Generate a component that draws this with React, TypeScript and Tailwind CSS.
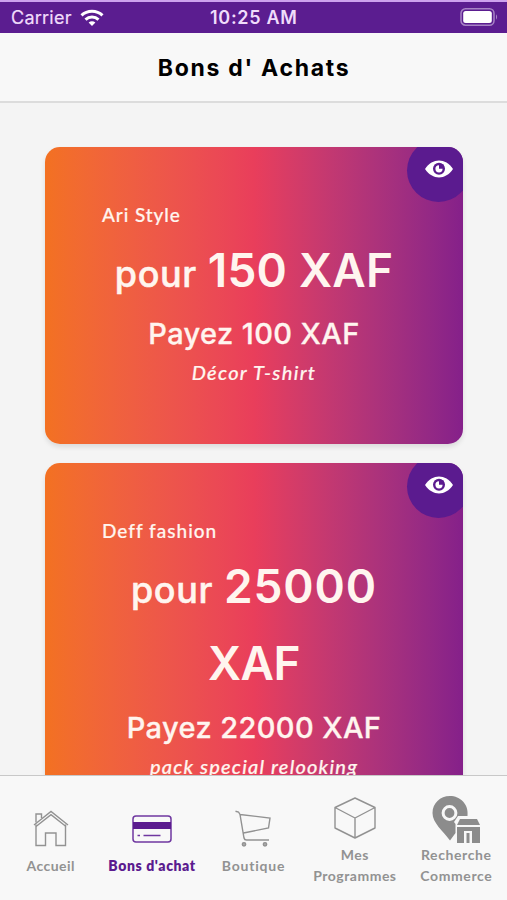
import React from "react";

type Line = { text: string; cls: string };

type Voucher = {
  shop: Line;
  prefix: Line;
  value: Line;
  rest?: Line;
  price: Line;
  note: Line;
};

const vouchers: Voucher[] = [
  {
    shop: { text: "Ari Style", cls: "tracking-[0.9px]" },
    prefix: { text: "pour", cls: "tracking-[0.6px]" },
    value: { text: "150 XAF", cls: "tracking-[0.2px]" },
    price: { text: "Payez 100 XAF", cls: "tracking-[0.4px]" },
    note: { text: "Décor T-shirt", cls: "tracking-[1.3px]" },
  },
  {
    shop: { text: "Deff fashion", cls: "tracking-[1px]" },
    prefix: { text: "pour", cls: "tracking-[0.6px]" },
    value: { text: "25000", cls: "tracking-[0.9px]" },
    rest: { text: "XAF", cls: "-tracking-[0.5px]" },
    price: { text: "Payez 22000 XAF", cls: "tracking-[0.4px]" },
    note: { text: "pack special relooking", cls: "tracking-[1.2px]" },
  },
];

function StatusBar() {
  return (
    <div className="relative flex h-[33px] shrink-0 items-center justify-between border-t-2 border-[#cda2ee] bg-[#5b1d90] pl-[11px] pr-[8px] font-['Inter',sans-serif] text-[#f0dcfb]">
      <div className="flex items-center gap-[8px]">
        <span className="text-[18px] leading-none tracking-[0.25px] [-webkit-text-stroke:0.2px]">Carrier</span>
        <svg width="24" height="18" viewBox="0 0 24 18" fill="none" stroke="#fff" strokeWidth="3">
          <path d="M1.5 6.4C7.3.9 16.700.9 22.500 6.400" />
          <path d="M5.500 10.600C9.200 7.100 14.800 7.100 18.500 10.600" />
          <path d="M8.600 13.500C10.600 11.700 13.400 11.700 15.400 13.500L12 17Z" fill="#fff" stroke="none" />
        </svg>
      </div>
      <span className="absolute left-[210px] top-[7px] whitespace-nowrap text-[18px] font-semibold leading-none tracking-[0.7px]">
        10:25 AM
      </span>
      <svg width="39" height="18" viewBox="0 0 39 18" className="-mt-[2px]">
        <rect x="1" y=".8" width="33" height="16.400" rx="4.500" fill="none" stroke="#a783c5" strokeWidth="1.500" />
        <rect x="3.200" y="3" width="28.600" height="12" rx="2.500" fill="#fff" />
        <path d="M36 6.300Q38.300 9 36 11.700Z" fill="#a783c5" />
      </svg>
    </div>
  );
}

function EyeBadge() {
  return (
    <div className="absolute -top-[8px] left-[362px] flex size-[63px] items-center justify-center rounded-full bg-[#5b1b8f]">
      <svg width="28" height="18" viewBox="0 0 28 18" className="mb-[3px]">
        <path d="M0 9C7.500-2.300 20.500-2.300 28 9C20.500 20.300 7.500 20.300 0 9Z" fill="#fff" />
        <circle cx="14" cy="8.800" r="6" fill="#5b1b8f" />
        <circle cx="14" cy="8.800" r="3.600" fill="#fff" />
        <path d="M14 8.800V4.500H18.500V8.800Z" fill="#5b1b8f" />
      </svg>
    </div>
  );
}

function VoucherCard({ v }: { v: Voucher }) {
  return (
    <article className="relative flex shrink-0 flex-col items-center overflow-hidden rounded-[15px] bg-linear-to-r from-[#f37121] via-[#e93e5b] to-[#85208a] pb-[55px] pt-[53px] text-[#fff5ef] shadow-[0_3px_5px_rgba(0,0,0,0.1)]">
      <EyeBadge />
      <h2
        className={`h-[30px] self-start pl-[57px] text-[19px] font-medium leading-[29px] [-webkit-text-stroke:0.2px] ${v.shop.cls}`}
      >
        {v.shop.text}
      </h2>
      <div className="flex h-[78px] items-baseline gap-[11px] whitespace-nowrap font-['Inter',sans-serif] leading-[78px]">
        <span className={`text-[36px] font-medium leading-[78px] [-webkit-text-stroke:0.5px] ${v.prefix.cls}`}>
          {v.prefix.text}
        </span>
        <span className={`text-[46px] font-semibold leading-[80px] ${v.value.cls}`}>{v.value.text}</span>
      </div>
      {v.rest && (
        <div className={`h-[78px] font-['Inter',sans-serif] text-[46px] font-semibold leading-[79px] ${v.rest.cls}`}>
          {v.rest.text}
        </div>
      )}
      <p
        className={`h-[47px] whitespace-nowrap pt-px font-['Inter',sans-serif] text-[29px] font-medium leading-[50px] [-webkit-text-stroke:0.3px] ${v.price.cls}`}
      >
        {v.price.text}
      </p>
      <p
        className={`whitespace-nowrap text-[20px] font-medium italic leading-[34px] [-webkit-text-stroke:0.2px] ${v.note.cls}`}
      >
        {v.note.text}
      </p>
    </article>
  );
}

function HomeIcon() {
  return (
    <svg width="36" height="37" viewBox="0 0 36 37" fill="none" stroke="#929292" strokeWidth="1.400">
      <path d="M1 15L18 1.500L35 15M3 16.500L18 4.700L33 16.500" />
      <path d="M3 14.500V35.500H12.500V23H23V35.500H32.500V14.500M3 12.500V4H8.500V8" />
    </svg>
  );
}

function CardIcon() {
  return (
    <svg width="40" height="28" viewBox="0 0 40 28" fill="none" stroke="#6f37a0" strokeWidth="1.500">
      <rect x="1" y="1" width="38" height="26" rx="3" />
      <path d="M1 7H39V14H1Z" fill="#5b1b8f" stroke="none" />
      <path d="M5.500 20.500H8M11.500 20.500H28.500" />
    </svg>
  );
}

function CartIcon() {
  return (
    <svg width="36" height="37" viewBox="0 0 36 37" fill="none" stroke="#929292" strokeWidth="1.400">
      <path d="M.5 1.200L3.500 2L5 4.500L9 28C9.300 29.500 10 30 11.500 30H34M5 4.500L35 8L33.500 18L8.500 23" />
      <circle cx="9" cy="34.300" r="1.700" fill="#aaa" />
      <circle cx="30" cy="34.300" r="1.700" fill="#aaa" />
    </svg>
  );
}

function BoxIcon() {
  return (
    <svg width="42" height="42" viewBox="0 0 42 42" fill="none" stroke="#929292" strokeWidth="1.400" strokeLinejoin="round">
      <path d="M21 1L41 10.500V31L21 41L1 31V10.500ZM1 10.500L21 21L41 10.500M21 21V41" />
    </svg>
  );
}

function StoreIcon() {
  return (
    <svg width="49" height="48" viewBox="0 0 49 48" fill="#8c8c8c">
      <path d="M18 0C8 0 .5 7.500 .5 17C.5 27 11 35 18 44.500L23.500 37V28L22 26L26 20H35.500C37 8 28 0 18 0Z" />
      <circle cx="17.500" cy="17" r="6.400" fill="#8c8c8c" stroke="#f8f8f8" strokeWidth="3" />
      <path d="M28 23H45L48 29H25Z" />
      <path d="M25 31H48V47H40V35H32V47H25ZM34.500 37H37.500V47H34.500Z" />
    </svg>
  );
}

type Tab = { icon: React.ReactNode; lines: Line[]; pad: string; gap: string; active?: boolean };

const tabs: Tab[] = [
  { icon: <HomeIcon />, lines: [{ text: "Accueil", cls: "tracking-[0.45px]" }], pad: "pt-[34px]", gap: "mt-[9px]" },
  { icon: <CardIcon />, lines: [{ text: "Bons d'achat", cls: "tracking-[0.6px]" }], pad: "pt-[39px]", gap: "mt-[13px]", active: true },
  { icon: <CartIcon />, lines: [{ text: "Boutique", cls: "tracking-[0.8px]" }], pad: "pt-[34px]", gap: "mt-[9px]" },
  {
    icon: <BoxIcon />,
    lines: [
      { text: "Mes", cls: "tracking-[0.6px]" },
      { text: "Programmes", cls: "tracking-[0.5px]" },
    ],
    pad: "pt-[21px]",
    gap: "mt-[6px]",
  },
  {
    icon: <StoreIcon />,
    lines: [
      { text: "Recherche", cls: "tracking-[0.6px]" },
      { text: "Commerce", cls: "tracking-[0.6px]" },
    ],
    pad: "pt-[20px]",
    gap: "mt-[1px]",
  },
];

function TabBar() {
  return (
    <nav className="grid h-[125px] shrink-0 grid-cols-5 border-t border-[#c8c8c8] bg-[#f8f8f8]">
      {tabs.map((tab) => (
        <div
          key={tab.lines[0].text}
          className={`flex flex-col items-center whitespace-nowrap text-[14px] leading-[20.500px] ${tab.pad} ${
            tab.active ? "font-extrabold text-[#5b1b8f]" : "font-bold text-[#929292]"
          }`}
        >
          {tab.icon}
          <div className={`flex flex-col items-center ${tab.gap}`}>
            {tab.lines.map((l) => (
              <span key={l.text} className={l.cls}>
                {l.text}
              </span>
            ))}
          </div>
        </div>
      ))}
    </nav>
  );
}

export default function App() {
  return (
    <div className="flex h-[900px] w-[507px] flex-col overflow-hidden bg-[#f4f4f4] font-['Lato',sans-serif]">
      <StatusBar />
      <header className="flex h-[70px] shrink-0 items-center justify-center border-b-2 border-[#dcdcdc] bg-[#f8f8f8]">
        <h1 className="-mr-px mt-[3px] whitespace-pre font-['Inter',sans-serif] text-[23px] font-bold leading-none tracking-[1.7px] text-black">
          Bons d' Achats
        </h1>
      </header>
      <main className="flex min-h-0 flex-1 flex-col gap-[19px] overflow-hidden pl-[45px] pr-[44px] pt-[44px]">
        {vouchers.map((v) => (
          <VoucherCard key={v.shop.text} v={v} />
        ))}
      </main>
      <TabBar />
    </div>
  );
}
